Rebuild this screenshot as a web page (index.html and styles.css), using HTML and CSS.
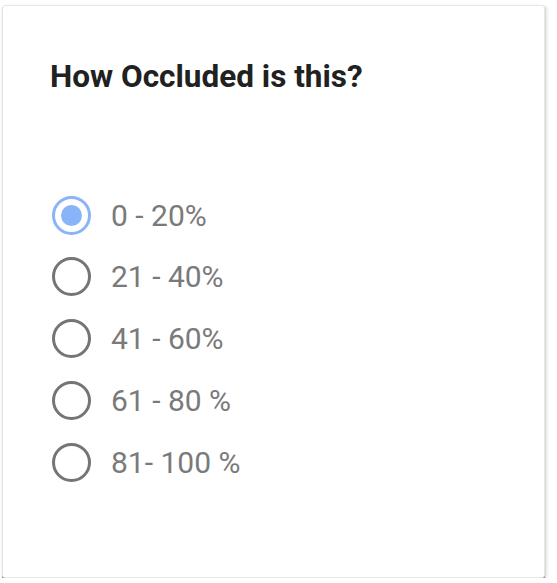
FILE: index.html
```html
<!DOCTYPE html>
<html>
<head>
<meta charset="utf-8">
<link rel="stylesheet" href="styles.css">
</head>
<body>
<div class="card">
  <h1 class="title">How Occluded is this?</h1>
  <div class="options">
    <label class="option"><span class="radio checked"><span class="dot"></span></span><span class="label">0 - 20%</span></label>
    <label class="option"><span class="radio"></span><span class="label">21 - 40%</span></label>
    <label class="option"><span class="radio"></span><span class="label">41 - 60%</span></label>
    <label class="option"><span class="radio"></span><span class="label">61 - 80 %</span></label>
    <label class="option"><span class="radio"></span><span class="label">81- 100 %</span></label>
  </div>
</div>
</body>
</html>
```
FILE: styles.css
```css
html, body { margin: 0; padding: 0; background: #fff; }
body { padding: 5px 0 0 2px; font-family: Roboto, "Noto Sans", sans-serif; }
.card {
  box-sizing: border-box;
  width: 543px;
  height: 573px;
  background: #fff;
  border: 1px solid #e6e6e6;
  border-radius: 3px;
  box-shadow: 0 2px 1px rgba(0,0,0,0.45), 2px 1px 3px rgba(0,0,0,0.12);
  padding: 51px 0 0 49px;
}
.title {
  margin: 0 0 0 -2px;
  font-size: 31.5px;
  font-weight: 700;
  color: #212121;
  line-height: 40px;
}
.options {
  margin-top: 98px;
  display: flex;
  flex-direction: column;
  gap: 21.75px;
}
.option {
  display: flex;
  align-items: center;
  gap: 20px;
  height: 40px;
}
.radio {
  box-sizing: border-box;
  width: 39px;
  height: 39px;
  border-radius: 50%;
  border: 3px solid #757575;
  display: flex;
  align-items: center;
  justify-content: center;
  flex: none;
}
.radio.checked { border-color: #8ab4f8; }
.dot { width: 21px; height: 21px; border-radius: 50%; background: #8ab4f8; }
.label { font-size: 30px; color: #7a7a7a; }
```
